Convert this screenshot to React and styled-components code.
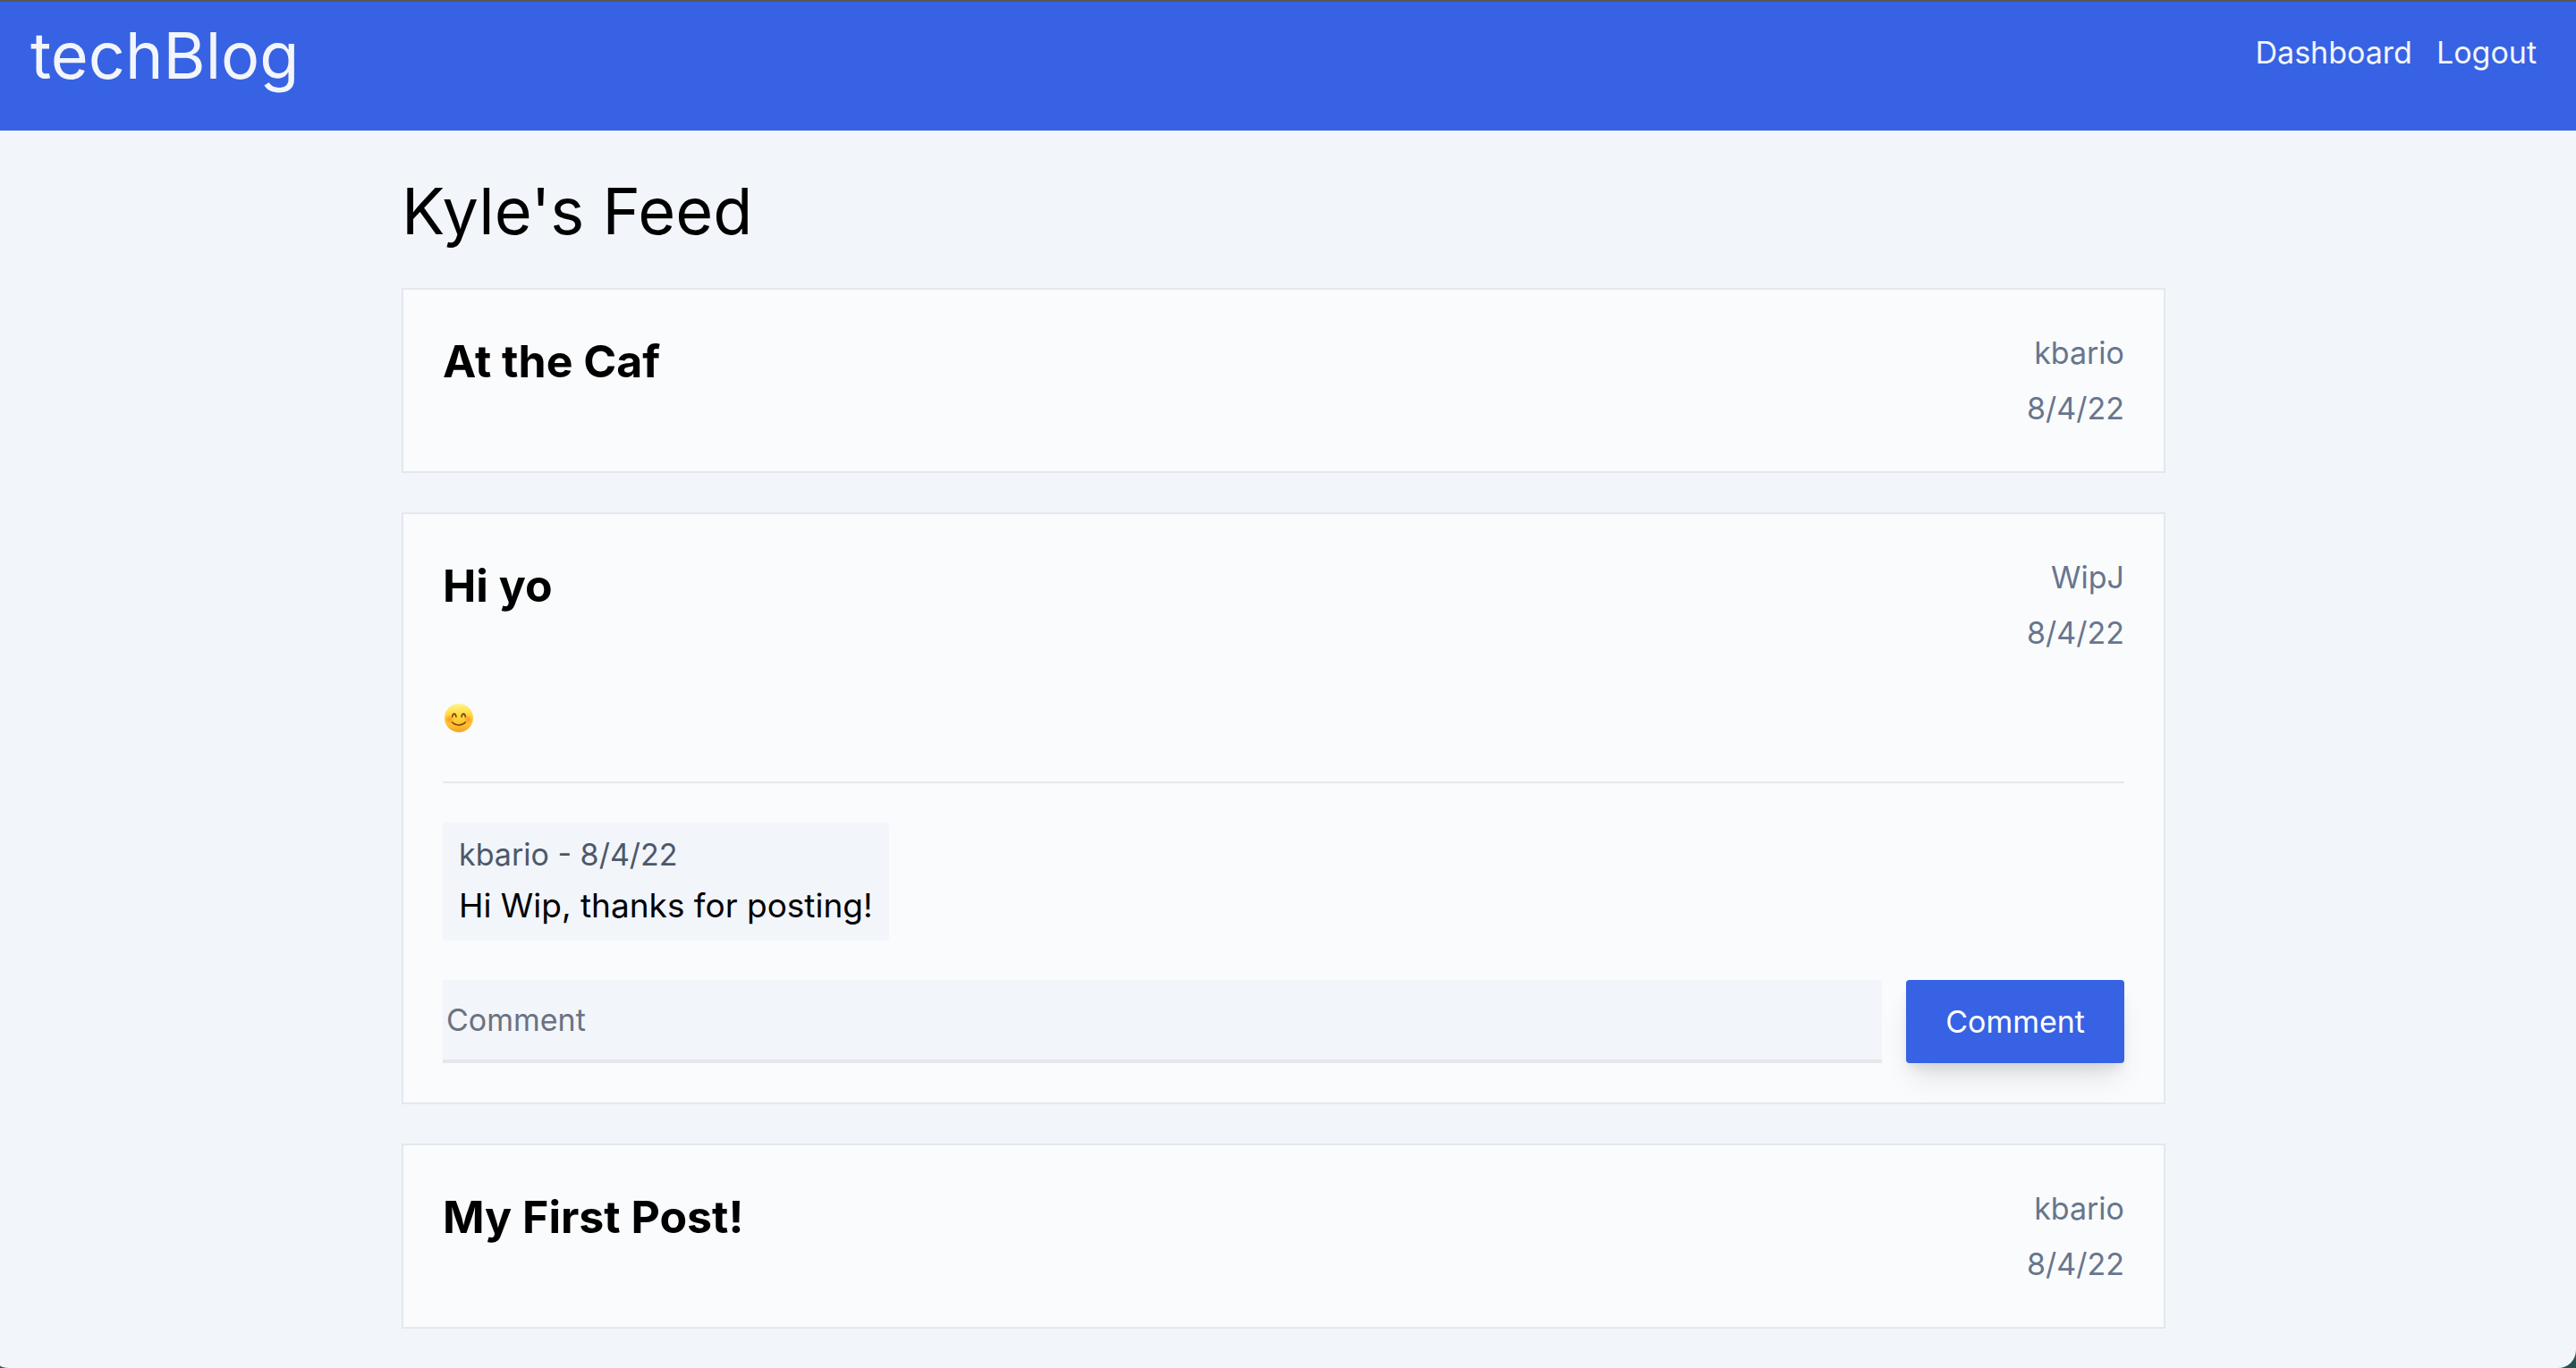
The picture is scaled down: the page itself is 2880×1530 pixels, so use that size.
import React from "react";
import styled, { createGlobalStyle } from "styled-components";

const Global = createGlobalStyle`
  *, *::before, *::after { box-sizing: border-box; }
  html { background: #24544f; }
  body { margin: 0; font-family: Inter, "Liberation Sans", sans-serif; font-size: 34px; line-height: 53px; color: #000; }
  h1, h2, p, ul { margin: 0; padding: 0; }
`;

const Page = styled.div`
  min-height: 100vh;
  background: #f2f5fa;
  border-top: 2px solid #55565a;
  border-radius: 0 0 20px 10px / 0 0 20px 3px;
`;

const Header = styled.header`
  display: flex;
  justify-content: space-between;
  align-items: flex-start;
  padding: 18px 44px 42px 34px;
  background: #3762e4;
`;

const Logo = styled.a`
  font-size: 72px;
  line-height: 84px;
  color: #f2f5fa;
  text-decoration: none;
`;

const Nav = styled.nav`
  display: flex;
  gap: 27px;
  padding-top: 12px;
`;

const NavLink = styled.a`
  color: #f2f5fa;
  text-decoration: none;
`;

const Main = styled.main`
  display: flex;
  flex-direction: column;
  gap: 44px;
  width: 100%;
  max-width: 1972px;
  margin: 0 auto;
  padding: 48px 0 44px;
`;

const Gutter = styled.div`
  padding-right: 10px;
`;

const FeedTitle = styled.h1`
  font-size: 72px;
  line-height: 84px;
  font-weight: 400;
`;

const Card = styled.article`
  display: flex;
  flex-direction: column;
  gap: 44px;
  padding: 44px;
  background: #f9fbfd;
  border: 2px solid #e2e8ee;
`;

const CardHead = styled.div`
  display: flex;
  justify-content: space-between;
  align-items: flex-start;
`;

const PostTitle = styled.h2`
  font-size: 50px;
  line-height: 72px;
  font-weight: 700;
`;

const Meta = styled.div`
  display: flex;
  flex-direction: column;
  gap: 9px;
  text-align: right;
  color: #68758c;
`;

const Body = styled.div`
  display: flex;
  align-items: center;
  height: 52px;
`;

const Rule = styled.hr`
  width: 100%;
  margin: 0;
  border: 0;
  border-top: 2px solid #e5e7eb;
`;

const Reply = styled.div`
  align-self: flex-start;
  padding: 9px 18px;
  background: #f2f5fa;
  border-radius: 4px;
`;

const ReplyMeta = styled.p`
  color: #4c586b;
`;

const ReplyText = styled.p`
  font-size: 37px;
  line-height: 61px;
`;

const Form = styled.form`
  display: flex;
  gap: 27px;
`;

const Field = styled.input`
  flex: 1;
  min-width: 0;
  height: 93px;
  padding: 0 4px;
  border: 0;
  border-bottom: 4px solid #e5e7eb;
  border-radius: 0;
  background: #f2f5fa;
  font: inherit;
  color: #000;
  outline: none;
  &::placeholder { color: #6b7280; opacity: 1; }
`;

const Submit = styled.button`
  padding: 20px 44px;
  border: 0;
  border-radius: 4px;
  background: #3762e4;
  color: #fff;
  font: inherit;
  line-height: 53px;
  box-shadow: 0 22px 33px -7px rgba(0, 0, 0, 0.1), 0 9px 13px -4px rgba(0, 0, 0, 0.1);
`;

function Smile() {
  return (
    <svg width="37" height="37" viewBox="0 0 37 37" role="img" aria-label="😊">
      <defs>
        <linearGradient id="face" x1="0" y1="0" x2="0" y2="1">
          <stop offset="0" stopColor="#fff38c" />
          <stop offset="0.35" stopColor="#ffdc45" />
          <stop offset="0.75" stopColor="#fec02f" />
          <stop offset="1" stopColor="#f2a422" />
        </linearGradient>
        <radialGradient id="cheek">
          <stop offset="0" stopColor="#ff7b1c" stopOpacity="0.7" />
          <stop offset="1" stopColor="#ff8a1c" stopOpacity="0" />
        </radialGradient>
      </defs>
      <circle cx="18" cy="17" r="16" fill="url(#face)" />
      <circle cx="7.5" cy="18.5" r="5.5" fill="url(#cheek)" />
      <circle cx="28.5" cy="18.5" r="5.5" fill="url(#cheek)" />
      <g fill="none" stroke="#7a4505" strokeLinecap="round" strokeLinejoin="round" strokeWidth="1.6">
        <path d="M10.6 15.8C11.2 11.2 14.4 11.2 15 15.8" />
        <path d="M21 15.8C21.6 11.2 24.8 11.2 25.4 15.8" />
        <path d="M10.6 21.8C14.5 26 21.5 26 25.4 21.8" />
      </g>
    </svg>
  );
}

function Post({ title, author, date, children }) {
  return (
    <Card>
      <CardHead>
        <PostTitle>{title}</PostTitle>
        <Meta>
          <span>{author}</span>
          <span>{date}</span>
        </Meta>
      </CardHead>
      {children}
    </Card>
  );
}

export default function App() {
  return (
    <>
      <Global />
      <Page>
        <Header>
          <Logo href="#home">techBlog</Logo>
          <Nav>
            <NavLink href="#dashboard">Dashboard</NavLink>
            <NavLink href="#logout">Logout</NavLink>
          </Nav>
        </Header>
        <Gutter>
          <Main>
            <FeedTitle>Kyle's Feed</FeedTitle>
            <Post title="At the Caf" author="kbario" date="8/4/22" />
            <Post title="Hi yo" author="WipJ" date="8/4/22">
              <Body>
                <Smile />
              </Body>
              <Rule />
              <Reply>
                <ReplyMeta>kbario - 8/4/22</ReplyMeta>
                <ReplyText>Hi Wip, thanks for posting!</ReplyText>
              </Reply>
              <Form onSubmit={(e) => e.preventDefault()}>
                <Field type="text" placeholder="Comment" aria-label="Comment" />
                <Submit type="submit">Comment</Submit>
              </Form>
            </Post>
            <Post title="My First Post!" author="kbario" date="8/4/22" />
          </Main>
        </Gutter>
      </Page>
    </>
  );
}
